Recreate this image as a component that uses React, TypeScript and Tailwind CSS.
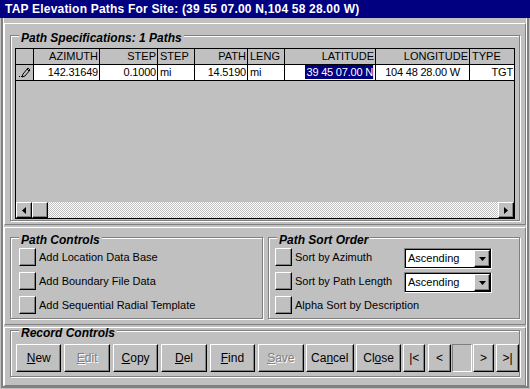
import React from "react";

const raised =
  "border border-t-white border-l-white border-b-black border-r-black shadow-[inset_-1px_-1px_0_#808080]";

function Group({
  title,
  className = "",
  children,
}: {
  title: string;
  className?: string;
  children: React.ReactNode;
}) {
  return (
    <div className={`relative border border-[#808080] shadow-[inset_1px_1px_0_#fff,1px_1px_0_#fff] ${className}`}>
      <span className="absolute left-[8px] top-[-3px] bg-[#c0c0c0] px-[2px] text-[12px] font-bold italic leading-[11px]">
        {title}
      </span>
      {children}
    </div>
  );
}

function Check({ label }: { label: string }) {
  return (
    <div className="flex items-center h-[18px]">
      <div className={`w-[17px] h-[18px] ${raised}`} />
      <span className="ml-[3px]">{label}</span>
    </div>
  );
}

function Select() {
  return (
    <div className="w-[88px] h-[21px] shrink-0 border border-t-[#808080] border-l-[#808080] border-b-white border-r-white">
      <div className="h-full border border-black bg-white flex items-center">
        <span className="pl-[2px] flex-1">Ascending</span>
        <div className={`w-[16px] h-[17px] flex items-center justify-center bg-[#c0c0c0] ${raised}`}>
          <svg width="7" height="4" viewBox="0 0 7 4">
            <path d="M0 0h7L3.5 4z" fill="#000" />
          </svg>
        </div>
      </div>
    </div>
  );
}

const cols = [
  { w: "w-[66px]", head: "AZIMUTH", hr: true, val: "142.31649", vr: true },
  { w: "w-[58px]", head: "STEP", hr: true, val: "0.1000", vr: true },
  { w: "w-[37px]", head: "STEP", hr: false, val: "mi", vr: false },
  { w: "w-[53px]", head: "PATH", hr: true, val: "14.5190", vr: true },
  { w: "w-[37px]", head: "LENG", hr: false, val: "mi", vr: false },
  { w: "w-[91px]", head: "LATITUDE", hr: true, val: "39 45 07.00 N", vr: true, sel: true },
  { w: "w-[94px]", head: "LONGITUDE", hr: true, val: "104 48 28.00 W", vr: true, pad: true },
  { w: "w-[44px]", head: "TYPE", hr: false, val: "TGT", vr: true },
];

function Btn({
  w,
  children,
  disabled,
  className = "",
}: {
  w: string;
  children: React.ReactNode;
  disabled?: boolean;
  className?: string;
}) {
  return (
    <div
      className={`${w} h-[28px] flex items-center justify-center ${raised} ${
        disabled ? "text-[#808080] [text-shadow:1px_1px_0_#fff]" : ""
      } ${className}`}
    >
      {children}
    </div>
  );
}

export default function App() {
  return (
    <div className="w-[530px] h-[389px] bg-[#c0c0c0] overflow-hidden text-[11px] text-black font-['Liberation_Sans',Arial,sans-serif] flex flex-col">
      {/* title bar */}
      <div className="h-[18px] bg-[#000080] text-white font-bold text-[12px] leading-[18px] pl-[5px] tracking-[0.2px] shrink-0">
        TAP Elevation Paths For Site: (39 55 07.00 N,104 58 28.00 W)
      </div>

      <div className="flex-1 mx-[1px] mb-[1px] border-l-2 border-r-2 border-b-2 border-l-[#808080] border-r-[#808080] border-b-[#808080] shadow-[inset_1px_0_0_#fff,inset_-1px_0_0_#fff,inset_0_-1px_0_#fff] px-[1px] pt-[5px] flex flex-col gap-[2px]">
        {/* path specs panel */}
        <div className="h-[202px] border border-t-white border-l-white border-r-[#808080] border-b-[#808080] px-[5px] pt-[11px]">
          <Group title="Path Specifications: 1 Paths" className="h-[186px] px-[4px] pt-[12px]">
            <div className="w-[500px] h-[171px] border border-black flex flex-col">
              <div className="flex h-[16px] border-b border-black">
                <div className="w-[18px] border-r border-black" />
                {cols.map((c, i) => (
                  <div
                    key={i}
                    className={`${c.w} border-r border-black leading-[15px] ${c.hr ? "text-right pr-[1px]" : "pl-[2px]"} ${i === 7 ? "border-r-0" : ""}`}
                  >
                    {c.head}
                  </div>
                ))}
              </div>
              <div className="flex h-[16px] border-b border-black">
                <div className="w-[18px] border-r border-black flex items-center justify-center">
                  <svg width="12" height="11" viewBox="0 0 12 11">
                    <path d="M9 1l2 2-5 6-3 1 1-3z" fill="none" stroke="#000" strokeWidth="1" />
                    <path d="M8 2l2 2" stroke="#000" />
                    <rect x="0" y="9" width="1" height="1" fill="#000" />
                    <rect x="2" y="9" width="1" height="1" fill="#000" />
                  </svg>
                </div>
                {cols.map((c, i) => (
                  <div
                    key={i}
                    className={`${c.w} bg-white border-r border-black leading-[15px] tracking-[-0.2px] ${c.vr ? "text-right" : "pl-[2px]"} ${c.pad ? "pr-[9px]" : "pr-[1px]"} ${i === 7 ? "border-r-0" : ""}`}
                  >
                    {c.sel ? (
                      <span className="bg-[#000080] text-white pl-[1px] border-r border-[#ffff00] inline-block leading-[14px]">
                        {c.val}
                      </span>
                    ) : (
                      c.val
                    )}
                  </div>
                ))}
              </div>
              <div className="flex-1" />
              {/* horizontal scrollbar */}
              <div className="h-[16px] flex">
                <div className={`w-[16px] h-[16px] flex items-center justify-center ${raised}`}>
                  <svg width="4" height="7" viewBox="0 0 4 7">
                    <path d="M4 0v7L0 3.5z" fill="#000" />
                  </svg>
                </div>
                <div className={`w-[16px] h-[16px] ${raised}`} />
                <div className="flex-1 bg-[repeating-conic-gradient(#fff_0_25%,#c0c0c0_0_50%)] bg-[length:2px_2px]" />
                <div className={`w-[16px] h-[16px] flex items-center justify-center ${raised}`}>
                  <svg width="4" height="7" viewBox="0 0 4 7">
                    <path d="M0 0v7L4 3.5z" fill="#000" />
                  </svg>
                </div>
              </div>
            </div>
          </Group>
        </div>

        {/* path controls panel */}
        <div className="h-[98px] border border-t-white border-l-white border-r-[#808080] border-b-[#808080] px-[5px] pt-[9px] flex gap-[5px]">
          <Group title="Path Controls" className="w-[253px] h-[82px] pl-[8px] pt-[10px]">
            <div className="flex flex-col gap-[6px]">
              <Check label="Add Location Data Base" />
              <Check label="Add Boundary File Data" />
              <Check label="Add Sequential Radial Template" />
            </div>
          </Group>
          <Group title="Path Sort Order" className="w-[252px] h-[82px] pl-[6px] pt-[10px]">
            <div className="flex flex-col gap-[6px]">
              <div className="flex items-start justify-between h-[18px] pr-[27px]">
                <Check label="Sort by Azimuth" />
                <Select />
              </div>
              <div className="flex items-start justify-between h-[18px] pr-[27px]">
                <Check label="Sort by Path Length" />
                <Select />
              </div>
              <Check label="Alpha Sort by Description" />
            </div>
          </Group>
        </div>

        {/* record controls panel */}
        <div className="flex-1 border border-t-white border-l-white border-r-[#808080] border-b-[#808080] px-[5px] pt-[2px]">
          <Group title="Record Controls" className="h-[47px] pl-[5px] pt-[13px] flex gap-[2px] text-[12px]">
            <Btn w="w-[46px]"><span><u>N</u>ew</span></Btn>
            <Btn w="w-[46px]" disabled className="ml-[1px]"><span><u>E</u>dit</span></Btn>
            <Btn w="w-[46px]" className="ml-[1px]"><span><u>C</u>opy</span></Btn>
            <Btn w="w-[46px]" className="ml-[1px]"><span><u>D</u>el</span></Btn>
            <Btn w="w-[46px]" className="ml-[1px]"><span><u>F</u>ind</span></Btn>
            <Btn w="w-[46px]" disabled className="ml-[1px]"><span><u>S</u>ave</span></Btn>
            <Btn w="w-[49px]"><span>Ca<u>n</u>cel</span></Btn>
            <Btn w="w-[46px]"><span>Cl<u>o</u>se</span></Btn>
            <Btn w="w-[22px]">|&lt;</Btn>
            <Btn w="w-[23px]" className="ml-[1px]">&lt;</Btn>
            <div className="w-[20px] h-[28px] -ml-[1px] border border-t-[#808080] border-l-[#808080] border-b-white border-r-white" />
            <Btn w="w-[22px]" className="-ml-[1px]">&gt;</Btn>
            <Btn w="w-[23px]">&gt;|</Btn>
          </Group>
        </div>
      </div>
    </div>
  );
}
